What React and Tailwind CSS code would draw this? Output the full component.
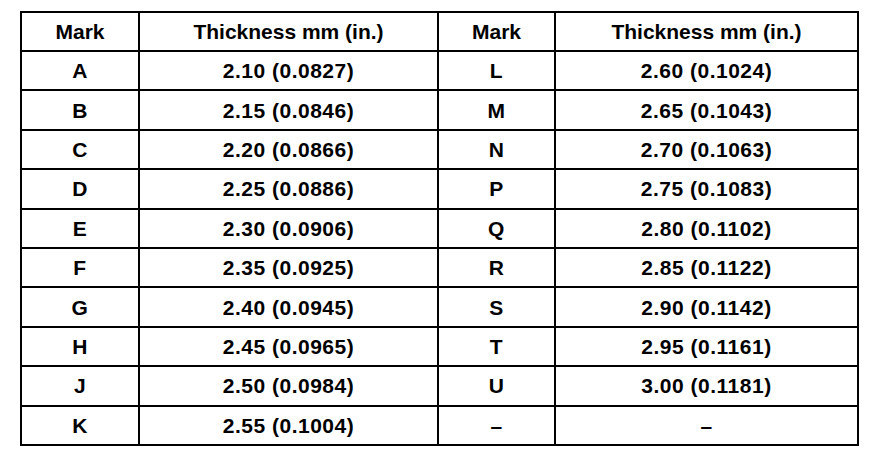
import React from "react";

const rows = [
  ["A", "2.10 (0.0827)", "L", "2.60 (0.1024)"],
  ["B", "2.15 (0.0846)", "M", "2.65 (0.1043)"],
  ["C", "2.20 (0.0866)", "N", "2.70 (0.1063)"],
  ["D", "2.25 (0.0886)", "P", "2.75 (0.1083)"],
  ["E", "2.30 (0.0906)", "Q", "2.80 (0.1102)"],
  ["F", "2.35 (0.0925)", "R", "2.85 (0.1122)"],
  ["G", "2.40 (0.0945)", "S", "2.90 (0.1142)"],
  ["H", "2.45 (0.0965)", "T", "2.95 (0.1161)"],
  ["J", "2.50 (0.0984)", "U", "3.00 (0.1181)"],
  ["K", "2.55 (0.1004)", "–", "–"],
];

export default function App() {
  return (
    <div className="w-[880px] h-[468px] bg-white pt-[11px] pl-[20px]" style={{ fontFamily: '"Liberation Sans", Arial, sans-serif' }}>
      <table className="border-collapse border-2 border-black text-black font-bold table-fixed w-[837px]">
        <colgroup>
          <col className="w-[118px]" />
          <col className="w-[299px]" />
          <col className="w-[117px]" />
          <col className="w-[303px]" />
        </colgroup>
        <thead>
          <tr className="h-[39px] text-[21px]">
            <th className="border-2 border-black text-center font-bold">Mark</th>
            <th className="border-2 border-black text-center font-bold">Thickness mm (in.)</th>
            <th className="border-2 border-black text-center font-bold">Mark</th>
            <th className="border-2 border-black text-center font-bold">Thickness mm (in.)</th>
          </tr>
        </thead>
        <tbody>
          {rows.map((r, i) => (
            <tr key={i} className="h-[39.4px] text-[21px] tracking-[0.5px]">
              {r.map((c, j) => (
                <td key={j} className="border-2 border-black text-center p-0 leading-none">
                  {c}
                </td>
              ))}
            </tr>
          ))}
        </tbody>
      </table>
    </div>
  );
}
